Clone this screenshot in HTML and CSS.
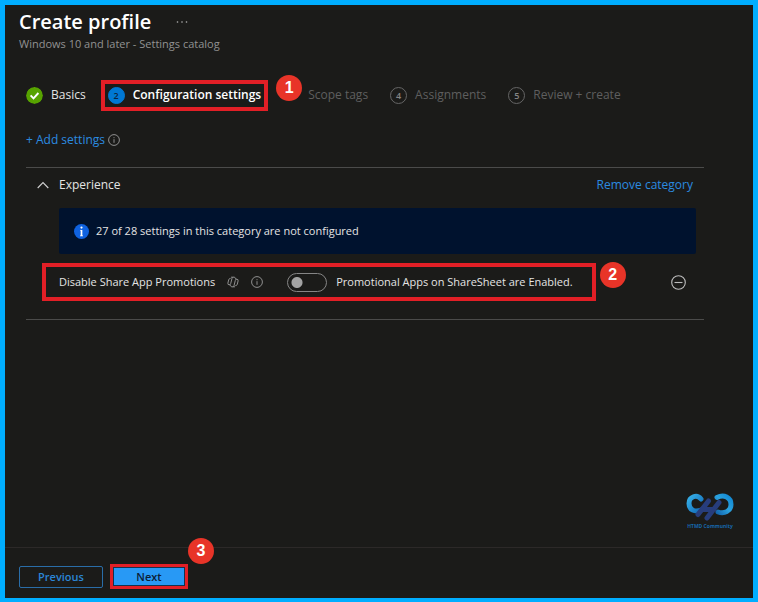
FILE: index.html
```html
<!DOCTYPE html>
<html lang="en">
<head>
<meta charset="utf-8">
<title>Create profile</title>
<link rel="stylesheet" href="styles.css">
</head>
<body>
<div class="frame">
  <header class="header">
    <div class="title-row">
      <h1>Create profile</h1>
      <button class="more" type="button" aria-label="More">
        <svg width="12" height="4" viewBox="0 0 12 4"><g fill="#b5b5b5"><circle cx="1.5" cy="2" r=".8"/><circle cx="6" cy="2" r=".8"/><circle cx="10.5" cy="2" r=".8"/></g></svg>
      </button>
    </div>
    <p class="subtitle">Windows 10 and later - Settings catalog</p>
  </header>

  <main class="content">
    <nav>
      <ol class="steps">
        <li class="step done">
          <svg class="dot" viewBox="0 0 17 17"><circle cx="8.5" cy="8.5" r="8.5" fill="#57a300"/><path d="M4.6 8.4l2.9 2.9 4.9-5.3" fill="none" stroke="#fff" stroke-width="1.9"/></svg>
          <span>Basics</span>
        </li>
        <li class="step current">
          <span class="dot">2</span><span>Configuration settings</span>
          <i class="mark"></i>
        </li>
        <li class="step">
          <span class="dot covered"></span><span>Scope tags</span>
          <b class="badge">1</b>
        </li>
        <li class="step"><span class="dot">4</span><span>Assignments</span></li>
        <li class="step"><span class="dot">5</span><span>Review + create</span></li>
      </ol>
    </nav>

    <div class="add">
      <a href="#">+ Add settings</a>
      <svg class="info" viewBox="0 0 12 12"><circle cx="6" cy="6" r="5.4"/><path d="M6 5.2v3.6M6 3.2v1"/></svg>
    </div>

    <section class="category">
      <div class="category-head">
        <button class="toggle" type="button">
          <svg width="12" height="8" viewBox="0 0 12 8"><path d="M.7 7L6 1.5 11.3 7" fill="none" stroke="#d0d0d0" stroke-width="1.1"/></svg>
          <span>Experience</span>
        </button>
        <a href="#">Remove category</a>
      </div>
      <div class="banner">
        <svg width="15" height="15" viewBox="0 0 15 15"><circle cx="7.5" cy="7.5" r="7.5" fill="#0f62e0"/><path d="M7.5 6v6" fill="none" stroke="#fff" stroke-width="1.7"/><path d="M6.3 6.4h1.2M6 11.8h3" fill="none" stroke="#fff" stroke-width=".8"/><circle cx="7.5" cy="3.6" r="1.1" fill="#fff"/></svg>
        <span>27 of 28 settings in this category are not configured</span>
      </div>
      <div class="setting">
        <div class="setting-main">
          <label for="promo">Disable Share App Promotions</label>
          <svg class="copilot" viewBox="0 0 12 12"><path d="M4 1.2h3.200q.9 0 1.100 1l.3 1h1.100q1.800 0 1.400 1.700l-.8 3.300q-.4 1.400-1.700 1.400H8.200M8 10.800H4.800q-.9 0-1.100-1l-.3-1H2.300Q.5 8.800.9 7.100l.8-3.300q.4-1.400 1.700-1.400h.4M6.200 1.200q-.9.100-1.200 1.200L3.700 7.500q-.4 1.300-1.400 1.300M5.800 10.800q.9-.1 1.200-1.200l1.300-5.100q.4-1.300 1.400-1.300"/></svg>
          <svg class="info" viewBox="0 0 12 12"><circle cx="6" cy="6" r="5.4"/><path d="M6 5.2v3.6M6 3.2v1"/></svg>
          <input class="switch" id="promo" type="checkbox" role="switch">
          <span>Promotional Apps on ShareSheet are Enabled.</span>
          <b class="badge">2</b>
        </div>
        <button class="remove" type="button" aria-label="Remove setting">
          <svg width="15" height="15" viewBox="0 0 15 15"><g fill="none" stroke="#bdbdbd" stroke-width="1.1"><circle cx="7.5" cy="7.5" r="6.8"/><path d="M3.500 7.500h8"/></g></svg>
        </button>
      </div>
    </section>
  </main>

  <div class="brand">
    <svg width="48" height="28" viewBox="0 0 48 28">
      <defs>
        <linearGradient id="c" x1="0" y1="0" x2="1" y2="1"><stop offset="0" stop-color="#35aee6"/><stop offset="1" stop-color="#126bb8"/></linearGradient>
        <linearGradient id="d" x1="1" y1="0" x2="0" y2="1"><stop offset="0" stop-color="#1188d2"/><stop offset=".5" stop-color="#2ba2de"/><stop offset="1" stop-color="#1468b0"/></linearGradient>
      </defs>
      <g fill="none" stroke-linecap="round" stroke-width="5">
        <path d="M15 6C11 1 3 3.500 3 10.500c0 6.500 6 9 12 6.500" stroke="url(#c)"/>
        <path d="M31 4.500c7-3.500 14 0 14 7 0 7-7 9.500-13 7.500" stroke="url(#d)"/>
        <path d="M12 21.500L22.500 8M21 25L33 9.500M18 16.500h10" stroke="#273d7c"/>
      </g>
    </svg>
    <span>HTMD Community</span>
  </div>

  <footer class="footer">
    <button class="btn" type="button">Previous</button>
    <div class="next">
      <button class="btn primary" type="button">Next</button>
      <b class="badge">3</b>
    </div>
  </footer>
</div>
</body>
</html>
```
FILE: styles.css
```css
* { box-sizing: border-box; }

body {
  margin: 0;
  font: 12px/16px "Open Sans", "Noto Sans", sans-serif;
  color: #e4e4e4;
  background: #1b1b19;
}

button {
  font: inherit;
  color: inherit;
  background: none;
  border: 0;
  padding: 0;
}

a { color: #2b8be0; text-decoration: none; }

svg { display: block; flex: none; }

.frame {
  display: flex;
  flex-direction: column;
  min-height: 100vh;
  border: solid #00aeff;
  border-width: 5px 5px 4px;
}

.header { padding: 4px 14px 0; }
.title-row { display: flex; align-items: center; gap: 25px; }
h1 { margin: 0; font-size: 20px; line-height: 26px; font-weight: 600; color: #fff; }
.subtitle { margin: 1px 0 0; font-size: 11px; color: #929292; }

.content { padding: 0 49px 0 21px; }

.steps {
  display: flex;
  gap: 22px;
  margin: 34px 0 0;
  padding: 0;
  list-style: none;
  line-height: 18px;
  white-space: nowrap;
}
.step { display: flex; align-items: center; gap: 8px; position: relative; color: #5f5f5f; }
.dot {
  width: 17px;
  height: 17px;
  flex: none;
  border: 1px solid #666;
  border-radius: 50%;
  font-size: 9px;
  line-height: 15px;
  font-weight: 600;
  text-align: center;
  color: #858585;
}
.done { color: #e4e4e4; }
.done .dot { border: 0; }
.current { color: #fff; font-weight: 600; }
.current .dot { background: #0078d4; border-color: #0078d4; color: #0b2540; }
.covered { visibility: hidden; }

.mark { position: absolute; inset: -6px -7px -7px; border: 4px solid #e21f26; }

.badge {
  position: absolute;
  width: 26px;
  height: 26px;
  border-radius: 50%;
  background: #e83428;
  color: #fff;
  font: bold 16px/26px "Liberation Sans", sans-serif;
  text-align: center;
}
.step .badge { left: -7px; top: -11px; }

.add { display: flex; align-items: center; gap: 3px; margin-top: 28px; }
.info, .copilot { width: 12px; height: 12px; fill: none; stroke: #8f8f8f; stroke-width: 1; }

.category {
  margin-top: 19px;
  border: solid #4b4b4a;
  border-width: 1px 0;
  padding-bottom: 18px;
}
.category-head {
  display: flex;
  justify-content: space-between;
  align-items: center;
  padding: 8px 11px 0;
  line-height: 18px;
}
.toggle { display: flex; align-items: center; gap: 10px; }

.banner {
  display: flex;
  align-items: center;
  gap: 7px;
  height: 46px;
  margin: 14px 8px 0 33px;
  padding: 0 15px;
  border-radius: 2px;
  background: #00122e;
  font-size: 11px;
}

.setting { display: flex; align-items: center; justify-content: space-between; margin: 9px 18px 0 16px; }
.setting-main {
  position: relative;
  display: flex;
  align-items: center;
  height: 38px;
  padding: 0 19px 0 13px;
  border: 4px solid #e21f26;
  font-size: 11px;
  white-space: nowrap;
}
.copilot { margin-left: 12px; }
.setting-main .info { margin-left: 12px; }
.setting-main .badge { left: 100%; top: -5px; margin-left: 8px; }

.switch {
  appearance: none;
  width: 40px;
  height: 19px;
  margin: 0 9px 0 24px;
  border: 1px solid #858585;
  border-radius: 10px;
  background: radial-gradient(circle at 9px 50%, #a3a3a3 5px, transparent 6px);
}

.brand {
  display: flex;
  flex-direction: column;
  align-items: center;
  align-self: flex-end;
  gap: 1px;
  margin: auto 19px 17px 0;
  font: bold 5px/8px "Open Sans", sans-serif;
  color: #1767ab;
  white-space: nowrap;
}

.footer {
  display: flex;
  align-items: center;
  gap: 7px;
  padding: 16px 14px 9px;
  border-top: 1px solid #2c2928;
}
.btn {
  width: 84px;
  height: 22px;
  border: 1px solid #2a6da8;
  border-radius: 2px;
  font-size: 11px;
  font-weight: 600;
  color: #2b86d6;
}
.next { position: relative; padding: 3px; border: 0; background: #e21f26; }
.btn.primary { display: block; width: 72px; height: 19px; line-height: 17px; border: 1px solid #14324f; border-radius: 0; background: #2899f5; color: #0c2036; }
.next .badge { left: 100%; bottom: 100%; }
```
